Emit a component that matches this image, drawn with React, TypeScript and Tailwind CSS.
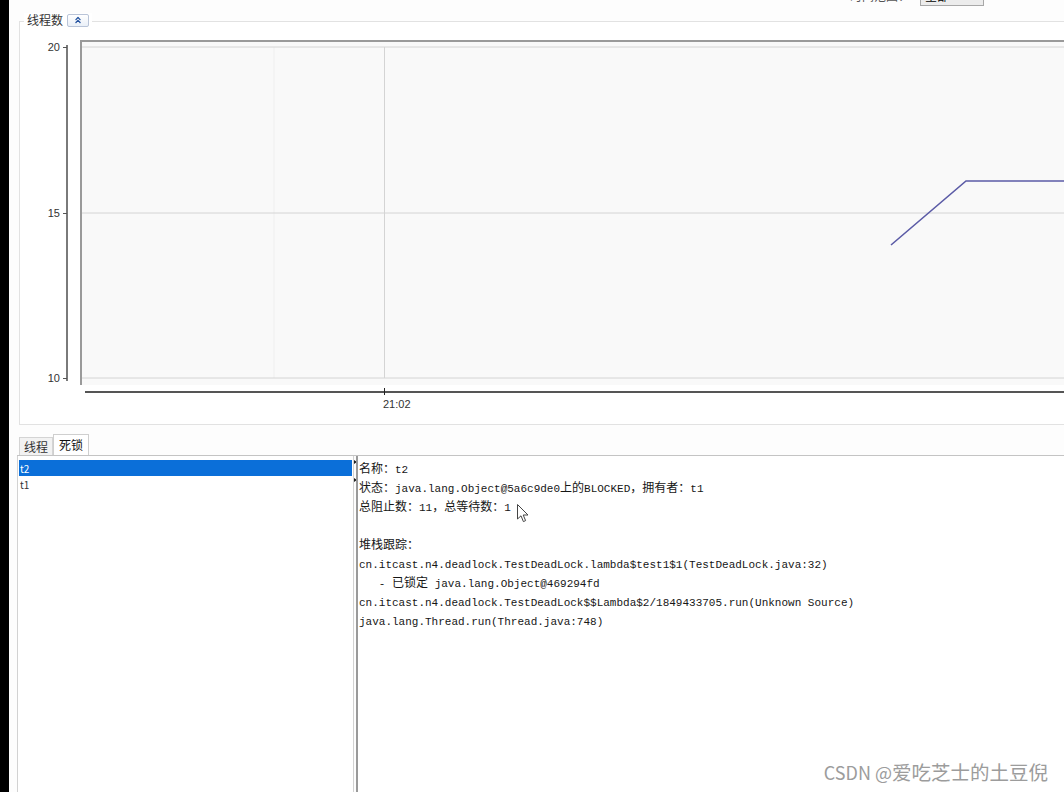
import { ChevronsUp } from "lucide-react";

const CJK = /([\u3000-\u9fff\uff00-\uffef]+)/;

// CJK runs are set a touch larger than the monospaced latin, like SimSun does
function Mixed({ text }: { text: string }) {
	return (
		<>
			{text.split(CJK).map((part, i) =>
				CJK.test(part) ? (
					<span key={i} className="text-[12px]">
						{part}
					</span>
				) : (
					part
				)
			)}
		</>
	);
}

function ThreadChart() {
	return (
		<svg width={1100} height={402} className="block">
			<g transform="translate(-20,-22)" fontFamily="'Liberation Sans', sans-serif" fontSize={11} fill="#333">
				{/* plot background */}
				<rect x={81} y={42} width={1040} height={343} fill="#f9f9f9" />
				<line x1={274} y1={47} x2={274} y2={378} stroke="#efefef" />
				{/* grid */}
				<line x1={82} y1={47} x2={1100} y2={47} stroke="#d4d4d4" />
				<line x1={82} y1={213} x2={1100} y2={213} stroke="#d4d4d4" />
				<line x1={82} y1={378} x2={1100} y2={378} stroke="#d4d4d4" />
				<line x1={384.5} y1={47} x2={384.5} y2={378} stroke="#d4d4d4" />
				{/* frame */}
				<line x1={80} y1={41} x2={1100} y2={41} stroke="#9a9a9a" strokeWidth={2} />
				<line x1={81} y1={40} x2={81} y2={385} stroke="#9a9a9a" strokeWidth={2} />
				{/* y axis */}
				<line x1={67} y1={45} x2={67} y2={381} stroke="#7a7a7a" strokeWidth={2} />
				<line x1={63} y1={47.5} x2={67} y2={47.5} stroke="#555" />
				<line x1={63} y1={213.5} x2={67} y2={213.5} stroke="#555" />
				<line x1={63} y1={378.5} x2={67} y2={378.5} stroke="#555" />
				<text x={60} y={51} textAnchor="end">20</text>
				<text x={60} y={217} textAnchor="end">15</text>
				<text x={60} y={382} textAnchor="end">10</text>
				{/* x axis */}
				<line x1={85} y1={392} x2={1100} y2={392} stroke="#555" strokeWidth={2} />
				<line x1={384.5} y1={388} x2={384.5} y2={395} stroke="#222" />
				<text x={383} y={408}>21:02</text>
				{/* series */}
				<polyline
					points="891,245 966,181 1100,181"
					fill="none"
					stroke="#5b5ba6"
					strokeWidth={1.6}
				/>
			</g>
		</svg>
	);
}

function Cursor() {
	return (
		<svg
			width={12}
			height={19}
			viewBox="0 0 12 19"
			className="inline-block align-top relative top-[5px] ml-[6px]"
		>
			<path
				d="M0.5 0.5 L0.5 15 L4 11.8 L6.4 17.6 L8.6 16.6 L6.2 11 L11 11 Z"
				fill="#fff"
				stroke="#444"
				strokeWidth={1}
				strokeLinejoin="round"
			/>
		</svg>
	);
}

export default function App() {
	const lines = [
		"名称：t2",
		"状态：java.lang.Object@5a6c9de0上的BLOCKED，拥有者：t1",
	];
	const stack = [
		"cn.itcast.n4.deadlock.TestDeadLock.lambda$test1$1(TestDeadLock.java:32)",
		"   - 已锁定 java.lang.Object@469294fd",
		"cn.itcast.n4.deadlock.TestDeadLock$$Lambda$2/1849433705.run(Unknown Source)",
		"java.lang.Thread.run(Thread.java:748)",
	];

	return (
		<div className="relative flex h-[792px] w-[1064px] overflow-hidden bg-white font-['Noto_Sans_CJK_SC',sans-serif]">
			<div className="w-[9px] shrink-0 bg-black" />
			<div className="flex w-[1120px] shrink-0 flex-col bg-[#fdfdfd]">
				{/* cut-off toolbar row */}
				<div className="flex h-[21px] justify-start overflow-hidden">
					<div className="-mt-[14px] ml-[841px] flex h-[20px] items-center gap-[10px]">
						<span className="text-[12px] text-[#555]">时间范围：</span>
						<div className="flex h-[20px] w-[64px] items-center border border-[#a8a8a8] bg-[#ececec] px-[4px] text-[12px]">
							全部
						</div>
					</div>
				</div>

				{/* thread count group */}
				<div className="relative ml-[10px] h-[404px] border border-[#e2e2e2] bg-white">
					<div className="absolute -top-[9px] left-[4px] flex h-[14px] items-center gap-[4px] bg-white px-[3px]">
						<span className="text-[12px] leading-[14px] text-[#333]">线程数</span>
						<button
							type="button"
							className="flex h-[13px] w-[22px] items-center justify-center rounded-[2px] border border-[#b9c4d8] bg-gradient-to-b from-white to-[#eaf0f8]"
						>
							<ChevronsUp size={10} strokeWidth={3} color="#1f4f9e" />
						</button>
					</div>
					<div className="overflow-hidden">
						<ThreadChart />
					</div>
				</div>

				{/* tabs */}
				<div className="ml-[8px] mt-[9px] flex h-[21px] items-end">
					<div className="ml-[2px] flex h-[18px] items-center border border-b-0 border-[#d4d4d4] bg-[#f2f2f2] px-[4px] text-[12px] text-[#333]">
						线程
					</div>
					<div className="flex h-[21px] items-center border border-b-0 border-[#cfcfcf] bg-white px-[5px] text-[12px] text-[#111]">
						死锁
					</div>
				</div>

				<div className="ml-[8px] flex flex-1 border-t border-[#c4c4c4]">
					{/* thread list */}
					<div className="w-[337px] shrink-0 border-x border-[#d2d2d2] bg-white pt-[4px] text-[10px]">
						<div className="mx-[1px] flex h-[16px] items-center bg-[#0b6fd9] px-[1px] text-white">
							t2
						</div>
						<div className="mx-[1px] flex h-[16px] items-center px-[1px] text-[#333]">t1</div>
					</div>

					{/* splitter */}
					<div className="flex w-[2px] shrink-0 flex-col items-center pt-[4px]">
						<svg width={3} height={22} viewBox="0 0 3 22">
							<path d="M0 0 L3 2 L0 4 Z" fill="#222" />
							<path d="M0 18 L3 20 L0 22 Z" fill="#222" />
						</svg>
					</div>

					{/* detail */}
					<div className="flex-1 border-l-2 border-[#9a9a9a] bg-white pl-[1px] pt-[5px] font-['Liberation_Mono','Noto_Sans_CJK_SC',monospace] text-[11px] leading-[19px] text-[#161616] whitespace-pre">
						{lines.map((l) => (
							<div key={l}>
								<Mixed text={l} />
							</div>
						))}
						<div>
							<Mixed text="总阻止数：11，总等待数：1" />
							<Cursor />
						</div>
						<div>&nbsp;</div>
						<div>
							<Mixed text="堆栈跟踪：" />
						</div>
						{stack.map((l) => (
							<div key={l}>
								<Mixed text={l} />
							</div>
						))}
					</div>
				</div>
			</div>

			<div className="absolute bottom-[6px] right-[16px] flex items-baseline text-[18px] text-[#9c9c9c] font-['Noto_Sans_CJK_SC',sans-serif] whitespace-pre">
				CSDN @<span className="text-[19.5px]">爱吃芝士的土豆倪</span>
			</div>
		</div>
	);
}
